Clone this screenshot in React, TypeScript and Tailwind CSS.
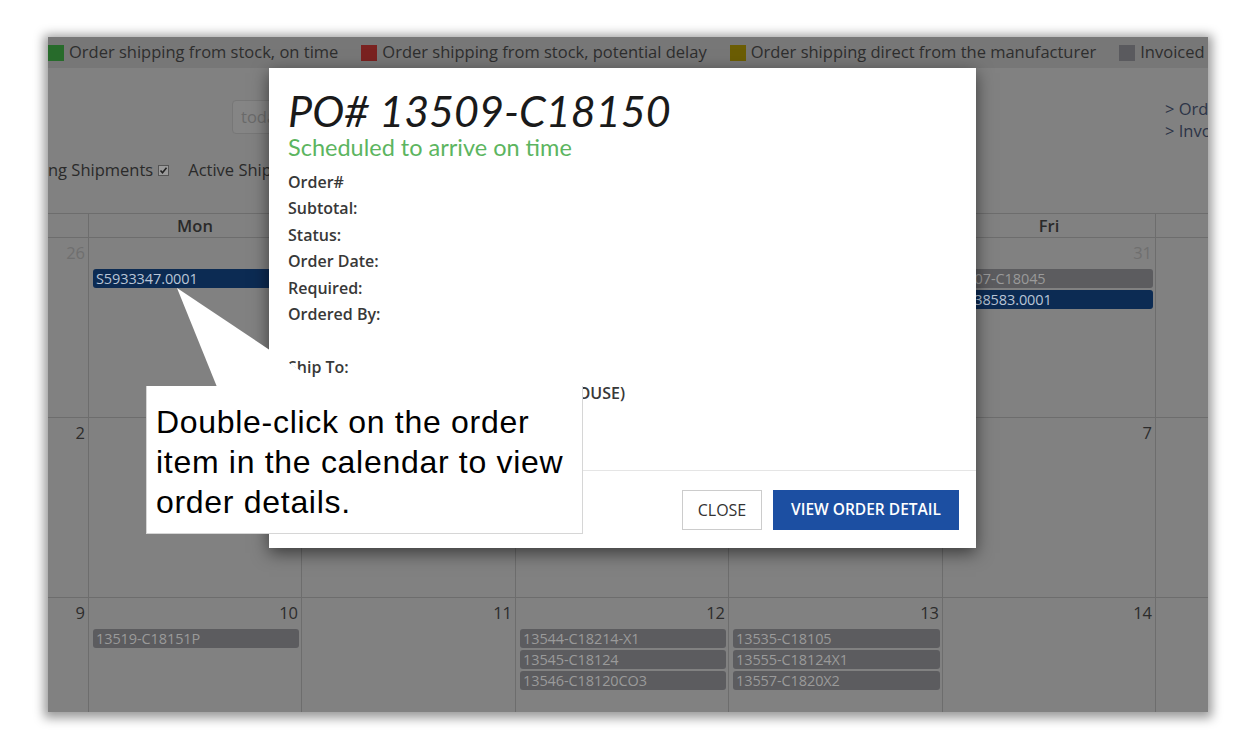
import React from 'react';

type Ev = { label: string; tone: 'gray' | 'navy' };
type Cell = { num: string; faded?: boolean; events?: Ev[] };

const legend = [
    { color: 'bg-[#276b2b]', label: 'Order shipping from stock, on time' },
    { color: 'bg-[#7a2220]', label: 'Order shipping from stock, potential delay' },
    { color: 'bg-[#6b5d04]', label: 'Order shipping direct from the manufacturer' },
    { color: 'bg-[#5a5a5e]', label: 'Invoiced' },
];

// Sat column is cropped off by the screenshot edge, so it stays empty
const days = ['', 'Mon', 'Tue', 'Wed', 'Thu', 'Fri', ''];

const weeks: Cell[][] = [
    [
        { num: '26', faded: true },
        { num: '27', faded: true, events: [{ label: 'S5933347.0001', tone: 'navy' }] },
        { num: '28', faded: true },
        { num: '29', faded: true },
        { num: '30', faded: true },
        {
            num: '31',
            faded: true,
            events: [
                { label: '13507-C18045', tone: 'gray' },
                { label: 'S5938583.0001', tone: 'navy' },
            ],
        },
        { num: '' },
    ],
    [{ num: '2' }, { num: '3' }, { num: '4' }, { num: '5' }, { num: '6' }, { num: '7' }, { num: '' }],
    [
        { num: '9' },
        { num: '10', events: [{ label: '13519-C18151P', tone: 'gray' }] },
        { num: '11' },
        {
            num: '12',
            events: [
                { label: '13544-C18214-X1', tone: 'gray' },
                { label: '13545-C18124', tone: 'gray' },
                { label: '13546-C18120CO3', tone: 'gray' },
            ],
        },
        {
            num: '13',
            events: [
                { label: '13535-C18105', tone: 'gray' },
                { label: '13555-C18124X1', tone: 'gray' },
                { label: '13557-C1820X2', tone: 'gray' },
            ],
        },
        { num: '14' },
        { num: '' },
    ],
];

const fields = ['Order#', 'Subtotal:', 'Status:', 'Order Date:', 'Required:', 'Ordered By:'];

const cols = 'grid grid-cols-[41px_213px_214px_213px_214px_213px_213px]';

function DayCell({ cell, first }: { cell: Cell; first: boolean }) {
    return (
        <div className="flex flex-col border-r border-[#6d6d6d]">
            <div className={`h-[30px] pr-[3px] pt-[3px] text-right text-[16.5px] ${cell.faded ? 'text-[#6f6f6f]' : 'text-[#2c2c2c]'}`}>
                {cell.num}
            </div>
            {!first && (
                <div className="flex flex-col gap-[2px] pl-[4px] pr-[2px] pt-[1px]">
                    {cell.events?.map((ev) => (
                        <div
                            key={ev.label}
                            className={`h-[19px] rounded-[3px] pl-[3px] text-[14.5px] leading-[19px] tracking-[-0.1px] whitespace-nowrap overflow-hidden ${
                                ev.tone === 'navy' ? 'bg-[#0c2b53] text-[#b9c5d6]' : 'bg-[#5c5c5f] text-[#9a9a9a]'
                            }`}
                        >
                            {ev.label}
                        </div>
                    ))}
                </div>
            )}
        </div>
    );
}

export default function App() {
    return (
        <div className="relative w-[1256px] h-[748px] bg-white overflow-hidden font-['Open_Sans',sans-serif]">
            <div className="relative ml-[48px] mt-[37px] w-[1160px] h-[675px] overflow-hidden bg-[#818181] shadow-[0_2px_10px_4px_rgba(0,0,0,0.4)]">
                {/* Legend */}
                <div className="flex h-[31px] items-center gap-[23px] bg-[#777777] whitespace-nowrap text-[16.5px] text-[#2e2e2e]">
                    {legend.map((l) => (
                        <div key={l.label} className="flex shrink-0 items-center gap-[5px]">
                            <span className={`inline-block w-[16px] h-[16px] ${l.color}`}></span>
                            <span>{l.label}</span>
                        </div>
                    ))}
                </div>

                {/* Toolbar */}
                <div className="h-[145px] flex flex-col">
                    <div className="flex h-[86px] whitespace-nowrap">
                        <div className="w-[1117px] shrink-0 pl-[184px] pt-[32px]">
                            <div className="inline-flex h-[34px] w-[70px] items-center rounded-[4px] border border-[#777] bg-[#858585] pl-[8px] text-[16.5px] text-[#6a6a6a]">
                                today
                            </div>
                        </div>
                        <div className="shrink-0 pt-[30px] text-[16.5px] leading-[22px] text-[#2c3447]">
                            <div>&gt; Order History</div>
                            <div>&gt; Invoice History</div>
                        </div>
                    </div>
                    <div className="flex items-center pt-[4px] whitespace-nowrap text-[16.5px] text-[#2a2a2a]">
                        <span>ng Shipments</span>
                        <svg width="11" height="11" viewBox="0 0 11 11" className="ml-[5px]">
                            <rect x="0.5" y="0.5" width="10" height="10" fill="#9a9a9a" stroke="#555" />
                            <path d="M2.5 5.5 L4.5 7.8 L8.5 2.8" fill="none" stroke="#222" strokeWidth="1.6" />
                        </svg>
                        <span className="ml-[19px]">Active Shipments</span>
                    </div>
                </div>

                {/* Calendar */}
                <div className={`${cols} h-[25px] border-t border-b border-[#6d6d6d] text-[16.5px] font-semibold text-[#2a2a2a]`}>
                    {days.map((d, i) => (
                        <div key={i} className="border-r border-[#6d6d6d] text-center leading-[23px]">
                            {d}
                        </div>
                    ))}
                </div>
                {weeks.map((week, wi) => (
                    <div key={wi} className={`${cols} h-[180px] border-b border-[#6d6d6d]`}>
                        {week.map((cell, ci) => (
                            <DayCell key={ci} cell={cell} first={ci === 0} />
                        ))}
                    </div>
                ))}

                {/* Modal */}
                <div className="absolute left-[221px] top-[31px] w-[707px] h-[480px] bg-white flex flex-col shadow-[0_5px_16px_rgba(0,0,0,0.55)]">
                    <div className="flex-1 pl-[19px] pt-[20px]">
                        <h1 className="font-['Lato',sans-serif] italic text-[43px] leading-[46px] text-[#1a1a1a]">PO# 13509-C18150</h1>
                        <div className="font-['Lato',sans-serif] text-[23.5px] leading-[26px] text-[#5cb560]">Scheduled to arrive on time</div>
                        <div className="mt-[9px] text-[16px] leading-[26.4px] font-semibold text-[#383838]">
                            {fields.map((f) => (
                                <div key={f}>{f}</div>
                            ))}
                            <div>&nbsp;</div>
                            <div>Ship To:</div>
                            <div className="flex w-[337px] justify-end whitespace-nowrap">DAKOTA WYE ELECTRIC INC (HOUSE)</div>
                        </div>
                    </div>
                    <div className="flex h-[78px] items-center justify-end gap-[11px] border-t border-[#e5e5e5] pr-[17px]">
                        <button className="h-[40px] w-[80px] border border-[#ccc] bg-white text-[16px] text-[#333]">CLOSE</button>
                        <button className="h-[40px] w-[186px] bg-[#1c4fa2] text-[15.5px] font-semibold text-white">VIEW ORDER DETAIL</button>
                    </div>
                </div>

                {/* Callout pointer */}
                <svg className="absolute left-0 top-0" width="400" height="360" viewBox="0 0 400 360">
                    <polygon points="129,251 169,350 277,350" fill="#fff" />
                </svg>

                {/* Callout */}
                <div className="absolute left-[98px] top-[349px] w-[437px] h-[148px] bg-white border border-[#d6d6d6] border-t-0 pl-[9px] pt-[16px] font-['Liberation_Sans',Arial,sans-serif] text-[32px] leading-[40px] tracking-[0.7px] text-black whitespace-nowrap">
                    <div>Double-click on the order</div>
                    <div>item in the calendar to view</div>
                    <div>order details.</div>
                </div>
            </div>
        </div>
    );
}
